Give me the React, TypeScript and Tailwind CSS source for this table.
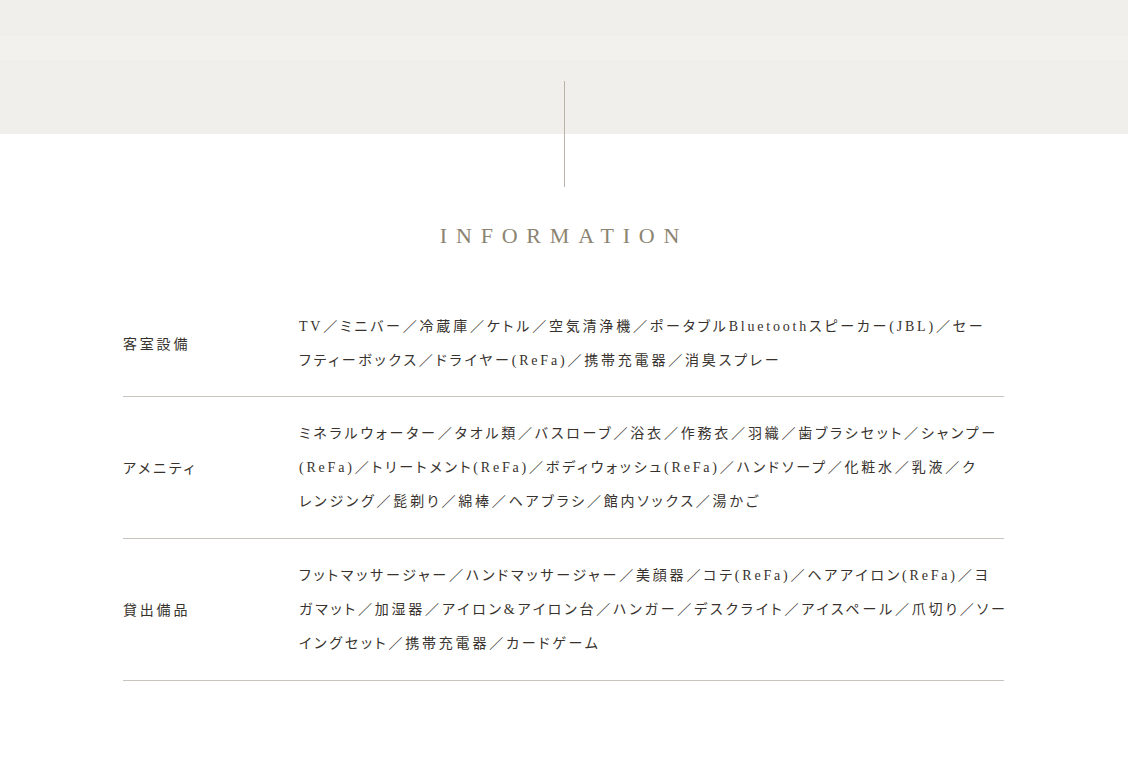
const rows = [
  {
    label: "客室設備",
    lines: [
      "TV／ミニバー／冷蔵庫／ケトル／空気清浄機／ポータブルBluetoothスピーカー(JBL)／セー",
      "フティーボックス／ドライヤー(ReFa)／携帯充電器／消臭スプレー",
    ],
  },
  {
    label: "アメニティ",
    lines: [
      "ミネラルウォーター／タオル類／バスローブ／浴衣／作務衣／羽織／歯ブラシセット／シャンプー",
      "(ReFa)／トリートメント(ReFa)／ボディウォッシュ(ReFa)／ハンドソープ／化粧水／乳液／ク",
      "レンジング／髭剃り／綿棒／ヘアブラシ／館内ソックス／湯かご",
    ],
  },
  {
    label: "貸出備品",
    lines: [
      "フットマッサージャー／ハンドマッサージャー／美顔器／コテ(ReFa)／ヘアアイロン(ReFa)／ヨ",
      "ガマット／加湿器／アイロン&アイロン台／ハンガー／デスクライト／アイスペール／爪切り／ソー",
      "イングセット／携帯充電器／カードゲーム",
    ],
  },
];

export default function App() {
  return (
    <div className="min-h-[780px] w-full bg-white font-['Liberation_Serif','Noto_Sans_CJK_JP',serif] text-[#37322d] [font-feature-settings:'palt']">
      <div className="relative">
        <div className="h-[134px] bg-[#f1efeb] pt-[36px]">
          <div className="h-[24px] bg-[#f3f1ed]" />
        </div>
        <div className="absolute left-[564px] top-[81px] h-[106px] w-px bg-[#b9b3a9]" />
      </div>

      <h2 className="mt-[88px] text-center text-[22px] leading-[28px] tracking-[0.4em] text-[#8c8471]">
        INFORMATION
      </h2>

      <div className="mx-[123px] mt-[40px] w-[881px] pb-[100px]">
        {rows.map((row, i) => (
          <div
            key={row.label}
            className={`flex items-center border-b border-[#c9c5be] pt-[20px] ${
              i === 0 ? "pb-[18px]" : "pb-[19px]"
            }`}
          >
            <div className="w-[176px] shrink-0 text-[14px] tracking-[0.2em]">
              {row.label}
            </div>
            <div className="w-[705px] text-[14px] leading-[34px] tracking-[0.2em]">
              {row.lines.map((line) => (
                <p key={line} className="whitespace-nowrap">
                  {line}
                </p>
              ))}
            </div>
          </div>
        ))}
      </div>
      <div className="h-px bg-[#f1efeb]" />
    </div>
  );
}
